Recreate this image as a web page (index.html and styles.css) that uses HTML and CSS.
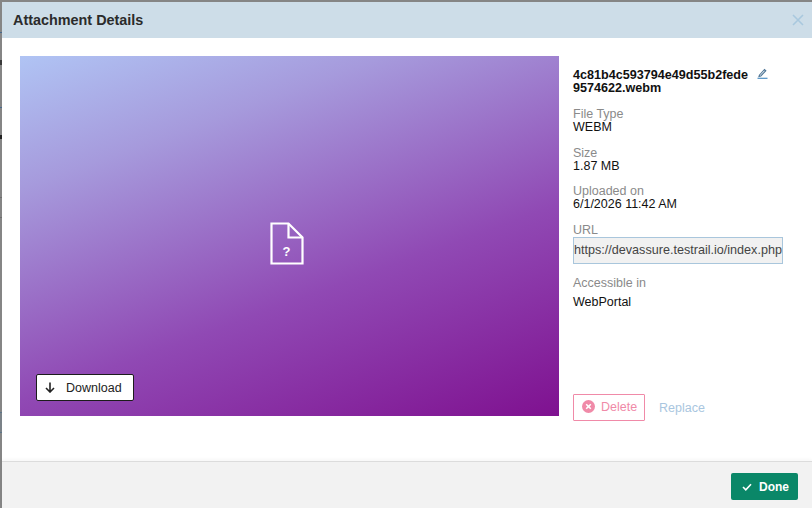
FILE: index.html
```html
<!DOCTYPE html>
<html lang="en">
<head>
    <meta charset="UTF-8">
    <title>Attachment Details</title>
    <link rel="stylesheet" href="styles.css">
</head>
<body>
    <div class="dialog">
        <header class="dialog-header">
            <h1>Attachment Details</h1>
            <svg class="close-icon" width="12" height="12" viewBox="0 0 12 12"><path d="M1 1l10 10M11 1L1 11"/></svg>
        </header>

        <main class="dialog-body">
            <section class="preview">
                <svg class="file-icon" width="34" height="43" viewBox="0 0 34 43">
                    <path d="M1.5 1.5h17l14 14v26h-31z"/>
                    <path d="M18.5 1.5v14h14"/>
                    <text x="16.5" y="33.5" text-anchor="middle">?</text>
                </svg>
                <button class="download-btn">
                    <svg width="10" height="11" viewBox="0 0 10 11"><path d="M5 0.5v9.5M1 6l4 4 4-4"/></svg>
                    Download
                </button>
            </section>

            <aside class="details">
                <div class="file-name">
                    <span>4c81b4c593794e49d55b2fede9574622.webm</span>
                    <svg class="edit-icon" width="11" height="11" viewBox="0 0 11 11"><path d="M2.5 7l5-5.5 1.3 1.2-5 5.3-1.8.4z"/><path class="underline" d="M0.5 10.3h10"/></svg>
                </div>
                <div class="detail"><label>File Type</label><p>WEBM</p></div>
                <div class="detail"><label>Size</label><p>1.87 MB</p></div>
                <div class="detail"><label>Uploaded on</label><p>6/1/2026 11:42 AM</p></div>
                <div class="detail">
                    <label>URL</label>
                    <input class="url-input" type="text" value="https://devassure.testrail.io/index.php" readonly>
                </div>
                <div class="detail accessible"><label>Accessible in</label><p>WebPortal</p></div>

                <div class="actions">
                    <button class="delete-btn">
                        <svg width="13" height="13" viewBox="0 0 13 13"><circle cx="6.5" cy="6.5" r="6.5"/><path d="M4.2 4.2l4.6 4.6M8.8 4.2L4.2 8.8"/></svg>
                        Delete
                    </button>
                    <a class="replace-link" href="#">Replace</a>
                </div>
            </aside>
        </main>

        <footer class="dialog-footer">
            <button class="done-btn">
                <svg width="10" height="8" viewBox="0 0 10 8"><path d="M1 4l2.8 2.8L9 1.2"/></svg>
                Done
            </button>
        </footer>
    </div>
</body>
</html>
```

FILE: styles.css
```css
/* General Styles */
html, body {
    height: 100%;
}

body {
    margin: 0;
    padding: 2px 0 0 2px;
    box-sizing: border-box;
    /* bits of the page behind the overlay, showing in the left edge */
    background:
        linear-gradient(#46698c, #46698c) 0 32px / 2px 1px no-repeat,
        linear-gradient(#3a3a3a, #3a3a3a) 0 60px / 2px 5px no-repeat,
        linear-gradient(#46698c, #46698c) 0 107px / 2px 1px no-repeat,
        linear-gradient(#222, #222) 0 135px / 2px 4px no-repeat,
        linear-gradient(#6e6e6e, #6e6e6e) 0 197px / 2px 1px no-repeat,
        linear-gradient(#6e6e6e, #6e6e6e) 0 217px / 2px 1px no-repeat,
        linear-gradient(#5c7488, #5c7488) 0 412px / 2px 1px no-repeat,
        linear-gradient(#7b8288, #7b8288) 0 413px / 2px 19px no-repeat,
        linear-gradient(#5c7488, #5c7488) 0 432px / 2px 1px no-repeat,
        #858585;
    font-family: "Liberation Sans", Arial, sans-serif;
    font-size: 12.5px;
    color: #111;
    overflow: hidden;
}

.dialog {
    height: 100%;
    display: flex;
    flex-direction: column;
    background-color: #fff;
}

.dialog-header {
    height: 36px;
    flex-shrink: 0;
    display: flex;
    align-items: center;
    justify-content: space-between;
    padding: 0 8px 0 11px;
    background-color: #cddde8;
}

.dialog-header h1 {
    margin: 0;
    font-size: 14.4px;
    font-weight: bold;
    color: #2b2b2b;
}

.close-icon path {
    fill: none;
    stroke: #a9c8de;
    stroke-width: 1.6;
}

.dialog-body {
    flex-grow: 1;
    display: flex;
    padding: 18px 0 0 18px;
    gap: 14px;
}

/* Preview */
.preview {
    position: relative;
    width: 539px;
    height: 360px;
    box-sizing: border-box;
    padding: 14px 6px 0 0;
    display: flex;
    align-items: center;
    justify-content: center;
    background: linear-gradient(160deg, #b0c4f4 0%, #a69adc 24%, #9049b4 62%, #7f1190 100%);
}

.file-icon path {
    fill: none;
    stroke: #fff;
    stroke-width: 2.2;
}

.file-icon text {
    fill: #fff;
    font-size: 13px;
    font-weight: bold;
}

.download-btn {
    position: absolute;
    left: 16px;
    bottom: 15px;
    width: 98px;
    height: 27px;
    display: flex;
    align-items: center;
    gap: 11px;
    padding: 0 0 0 8px;
    background-color: #fff;
    border: 1px solid #1c1c1c;
    border-radius: 2px;
    font-family: inherit;
    font-size: 12.5px;
    color: #222;
}

.download-btn path {
    fill: none;
    stroke: #222;
    stroke-width: 1.6;
}

/* Details */
.details {
    width: 210px;
    display: flex;
    flex-direction: column;
    height: 365px;
}

.file-name {
    display: flex;
    align-items: flex-start;
    gap: 8px;
    margin-top: 13px;
    font-size: 12.6px;
    font-weight: bold;
    line-height: 13px;
    margin-bottom: 13px;
}

.file-name span {
    width: 176px;
    word-break: break-all;
}

.edit-icon {
    flex-shrink: 0;
    margin-top: -1px;
}

.edit-icon path {
    fill: none;
    stroke: #4f7595;
    stroke-width: 1.1;
}

.edit-icon .underline {
    stroke: #4f8fc4;
    stroke-width: 1.2;
}

.detail {
    margin-bottom: 12.5px;
}

.detail label {
    display: block;
    color: #8a8a8a;
    line-height: 13px;
}

.detail p {
    margin: 0;
    line-height: 13px;
}

.url-input {
    display: block;
    box-sizing: border-box;
    width: 210px;
    height: 27px;
    padding: 0;
    border: 1px solid #a9c6dc;
    background-color: #f1f1f1;
    font-family: inherit;
    font-size: 12.6px;
    color: #444;
}

.accessible {
    margin-top: 1px;
}

.accessible p {
    margin-top: 6px;
}

.actions {
    margin-top: auto;
    display: flex;
    align-items: center;
    gap: 14px;
}

.delete-btn {
    width: 72px;
    height: 27px;
    display: flex;
    align-items: center;
    gap: 6px;
    padding: 0 0 2px 8px;
    background-color: #fff;
    border: 1px solid #f08aa8;
    border-radius: 1px;
    font-family: inherit;
    font-size: 12.5px;
    color: #f08aa8;
}

.delete-btn circle {
    fill: #f08aa8;
}

.delete-btn path {
    fill: none;
    stroke: #fff;
    stroke-width: 1.6;
}

.replace-link {
    color: #a9c6e0;
    text-decoration: none;
}

/* Footer */
.dialog-footer {
    height: 43px;
    flex-shrink: 0;
    display: flex;
    align-items: center;
    justify-content: flex-end;
    padding: 3px 14px 0 0;
    background-color: #f2f2f2;
    border-top: 1px solid #dcdcdc;
    box-shadow: 0 -2px 3px rgba(0, 0, 0, 0.03);
}

.done-btn {
    width: 67px;
    height: 27px;
    display: flex;
    align-items: center;
    gap: 7px;
    padding: 0 0 0 11px;
    background-color: #0a8768;
    border: none;
    border-radius: 2px;
    font-family: inherit;
    font-size: 12px;
    font-weight: bold;
    color: #fff;
}

.done-btn path {
    fill: none;
    stroke: #fff;
    stroke-width: 1.6;
}
```
